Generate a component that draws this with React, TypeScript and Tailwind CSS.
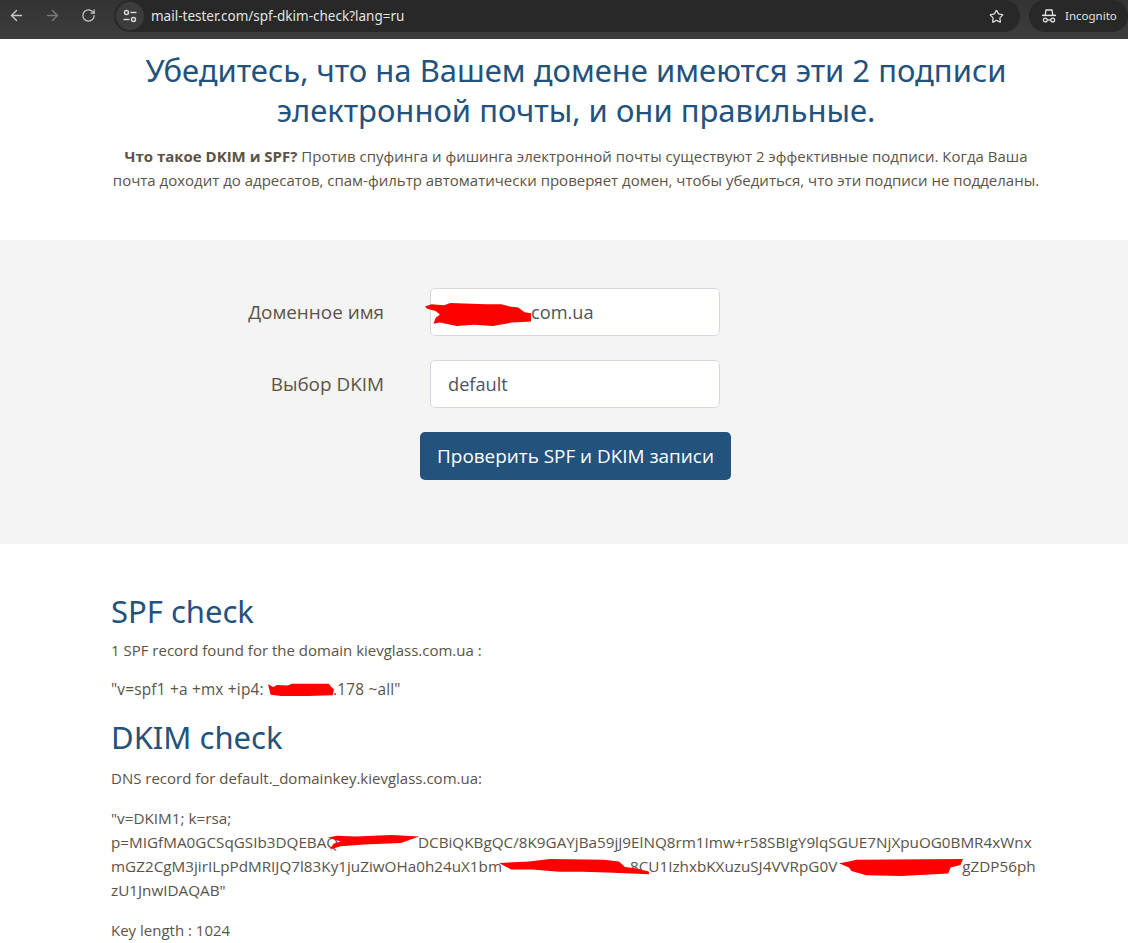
import { ArrowLeft, ArrowRight, RotateCw, Star } from 'lucide-react';

function Scribble({ className, d }: { className: string; d: string }) {
  return (
    <svg className={`absolute pointer-events-none ${className}`} viewBox="0 0 100 20" preserveAspectRatio="none">
      <path d={d} fill="#ff0000" />
    </svg>
  );
}

function IncognitoIcon() {
  return (
    <svg width="16" height="16" viewBox="0 0 16 16" fill="none" stroke="#e3e3e3" strokeWidth="1.3">
      <path d="M4.2 7 5 2h6l.8 5" />
      <path d="M1 7.4h14" strokeWidth="1.5" />
      <circle cx="4.3" cy="12" r="1.9" />
      <circle cx="11.7" cy="12" r="1.9" />
      <path d="M6.2 12h3.6" />
    </svg>
  );
}

function TuneIcon() {
  return (
    <svg width="16" height="16" viewBox="0 0 16 16" fill="none" stroke="#dcdcdc" strokeWidth="1.4">
      <circle cx="4.5" cy="4.5" r="2" />
      <path d="M8.5 4.5h6" />
      <path d="M1.5 11.5h6" />
      <circle cx="11.5" cy="11.5" r="2" />
    </svg>
  );
}

function Toolbar() {
  return (
    <div className="h-[39px] flex bg-gradient-to-b from-[#333333] to-[#3d3d3d]">
      <div className="w-[114px] flex items-start pt-[7px] pl-[8px] shrink-0">
        <ArrowLeft className="w-[17px] h-[17px] text-[#c7c7c7]" />
        <ArrowRight className="w-[17px] h-[17px] ml-[19px] text-[#7a7a7a]" />
        <RotateCw className="w-[15px] h-[15px] mt-[1px] ml-[20px] text-[#c7c7c7]" />
      </div>
      <div className="w-[906px] h-[32px] rounded-full bg-[#282828] flex items-center shrink-0">
        <div className="w-[28px] h-[28px] ml-[2px] rounded-full bg-[#3c3c3c] flex items-center justify-center">
          <TuneIcon />
        </div>
        <span className="ml-[7px] text-[13.5px] text-[#e3e3e3] font-['Noto_Sans',sans-serif]">
          mail-tester.com/spf-dkim-check?lang=ru
        </span>
        <Star className="w-[15px] h-[15px] ml-auto mr-[16px] text-[#d8d8d8]" />
      </div>
      <div className="ml-[9px] w-[99px] h-[32px] rounded-full bg-[#282828] flex items-center pl-[12px] gap-[8px] shrink-0">
        <IncognitoIcon />
        <span className="text-[11.5px] text-[#e3e3e3] font-['Noto_Sans',sans-serif]">Incognito</span>
      </div>
    </div>
  );
}

function Intro() {
  return (
    <div className="h-[201px] pt-[11px] pl-[24px] text-center">
      <h2 className="text-[31px] leading-[40px] text-[#23527c] font-['Noto_Sans',sans-serif]">
        Убедитесь, что на Вашем домене имеются эти 2 подписи
        <br />
        электронной почты, и они правильные.
      </h2>
      <p className="mt-[14px] text-[15px] leading-[24px] text-[#5b5346]">
        <b>Что такое DKIM и SPF?</b> Против спуфинга и фишинга электронной почты существуют 2 эффективные подписи. Когда Ваша
        <br />
        почта доходит до адресатов, спам-фильтр автоматически проверяет домен, чтобы убедиться, что эти подписи не подделаны.
      </p>
    </div>
  );
}

function Field({ label, value, indent, children }: { label: string; value: string; indent: string; children?: React.ReactNode }) {
  return (
    <div className="flex items-center h-[48px]">
      <label className="w-[384px] text-right text-[18.9px] text-[#5b5346]">{label}</label>
      <div className={`relative ml-[46px] w-[290px] h-[48px] pt-[2px] rounded-[5px] border border-[#d3d8e0] bg-white flex items-center text-[18.2px] text-[#4d5560] ${indent}`}>
        {value}
        {children}
      </div>
    </div>
  );
}

function DomainForm() {
  return (
    <div className="h-[304px] bg-[#f4f4f4] pt-[48px] flex flex-col gap-[24px]">
      <Field label="Доменное имя" value="com.ua" indent="pl-[100px]">
        <Scribble
          className="left-[-6px] top-[14px] w-[106px] h-[23px]"
          d="M0 3 L6 1 L18 2 L24 0 L58 1 L72 1 L80 3 L88 4 L94 8 L100 9 L100 16 L82 17 L64 20 L46 19 L30 20 L14 17 L8 18 L10 13 L14 10 L10 7 L2 5 Z"
        />
      </Field>
      <Field label="Выбор DKIM" value="default" indent="pl-[17px]" />
      <div className="pl-[420px]">
        <button className="w-[311px] h-[48px] rounded-[5px] bg-[#23527c] text-white text-[18.9px]">Проверить SPF и DKIM записи</button>
      </div>
    </div>
  );
}

function Results() {
  return (
    <div className="pl-[111px] pt-[48px] text-[15px] leading-[24px] text-[#5b5346]">
      <h3 className="text-[31px] leading-[38px] text-[#23527c] font-['Noto_Sans',sans-serif]">SPF check</h3>
      <p className="mt-[8px]">1 SPF record found for the domain kievglass.com.ua :</p>
      <p className="relative mt-[16px] whitespace-nowrap text-[15.4px] tracking-[0.2px]">
        <span className="inline-block w-[156px]">"v=spf1 +a +mx +ip4:</span>
        <span className="inline-block w-[66px]" />
        .178 ~all"
        <Scribble
          className="left-[157px] top-[5px] w-[66px] h-[13px]"
          d="M0 2 L8 6 L14 3 L30 4 L36 1 L60 1 L92 1 L96 6 L100 10 L98 19 L60 20 L20 20 L4 18 L2 10 Z"
        />
      </p>
      <h3 className="mt-[16px] text-[31px] leading-[38px] text-[#23527c] font-['Noto_Sans',sans-serif]">DKIM check</h3>
      <p className="mt-[10px]">DNS record for default._domainkey.kievglass.com.ua:</p>
      <div className="relative mt-[16px] whitespace-nowrap text-[15.25px]">
        <div>"v=DKIM1; k=rsa;</div>
        <div>
          <span className="inline-block w-[307px]">p=MIGfMA0GCSqGSIb3DQEBAQ</span>
          DCBiQKBgQC/8K9GAYjBa59jJ9ElNQ8rm1Imw+r58SBIgY9lqSGUE7NjXpuOG0BMR4xWnx
        </div>
        <div>
          <span className="inline-block w-[519px]">mGZ2CgM3jirILpPdMRIJQ7l83Ky1juZiwOHa0h24uX1bm</span>
          8CU1IzhxbKXuzuSJ4VVRpG0V<span className="inline-block w-[125px]" />gZDP56ph
        </div>
        <div>zU1JnwIDAQAB"</div>
        <Scribble
          className="left-[217px] top-[29px] w-[91px] h-[16px]"
          d="M0 3 L10 1 L30 2 L70 0 L100 2 L88 7 L80 10 L40 12 L14 14 L2 18 L6 11 L14 8 Z"
        />
        <Scribble
          className="left-[388px] top-[53px] w-[150px] h-[16px]"
          d="M0 5 L20 3 L34 0 L70 1 L80 3 L84 10 L92 12 L100 16 L100 19 L72 17 L56 16 L40 16 L22 13 L8 13 L4 9 Z"
        />
        <Scribble
          className="left-[728px] top-[53px] w-[124px] h-[17px]"
          d="M0 5 L8 3 L14 1 L100 0 L98 7 L90 10 L88 17 L50 20 L22 19 L10 14 L8 10 Z"
        />
      </div>
      <p className="mt-[16px]">Key length : 1024</p>
    </div>
  );
}

export default function App() {
  return (
    <div className="w-[1128px] h-[943px] overflow-hidden bg-white font-['Open_Sans',sans-serif]">
      <Toolbar />
      <Intro />
      <DomainForm />
      <Results />
    </div>
  );
}
